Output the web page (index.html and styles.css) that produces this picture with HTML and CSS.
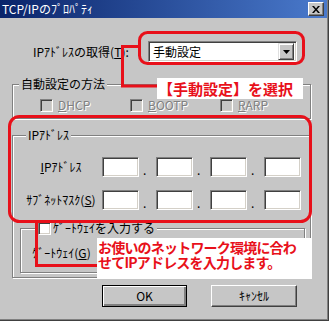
FILE: index.html
```html
<!DOCTYPE html>
<html lang="ja">
    <head>
        <meta charset="UTF-8">
        <meta name="viewport" content="width=device-width, initial-scale=1.0">
        <title>TCP/IPのプロパティ</title>
        <link rel="stylesheet" href="styles.css">
    </head>
    <body>
        <div class="window">
            <div class="titlebar">
                <span class="title">TCP/IPのﾌﾟﾛﾊﾟﾃｨ</span>
                <span class="close-btn">
                    <svg width="8" height="7" viewBox="0 0 8 7"><path d="M0 0h2l2 2.5L6 0h2L5 3.5 8 7H6L4 4.5 2 7H0l3-3.5z" fill="#000"/></svg>
                </span>
            </div>

            <div class="content">
                <div class="obtain-row">
                    <span class="obtain-label">IPｱﾄﾞﾚｽの取得(<u>T</u>):</span>
                    <div class="combo">
                        <span class="combo-text">手動設定</span>
                        <span class="combo-btn">
                            <svg width="7" height="4" viewBox="0 0 7 4"><path d="M0 0h7L3.5 4z" fill="#000"/></svg>
                        </span>
                    </div>
                </div>

                <fieldset class="group auto-group">
                    <legend>自動設定の方法</legend>
                    <div class="check-row">
                        <span class="check disabled"><span class="box"></span><span><u>D</u>HCP</span></span>
                        <span class="check disabled"><span class="box"></span><span><u>B</u>OOTP</span></span>
                        <span class="check disabled"><span class="box"></span><span><u>R</u>ARP</span></span>
                    </div>
                </fieldset>

                <fieldset class="group ip-group">
                    <legend>IPｱﾄﾞﾚｽ</legend>
                    <div class="addr-row">
                        <span class="addr-label"><u>I</u>Pｱﾄﾞﾚｽ</span>
                        <span class="octet"></span><span class="dot">.</span>
                        <span class="octet"></span><span class="dot">.</span>
                        <span class="octet"></span><span class="dot">.</span>
                        <span class="octet"></span>
                    </div>
                    <div class="addr-row">
                        <span class="addr-label">ｻﾌﾞﾈｯﾄﾏｽｸ(<u>S</u>)</span>
                        <span class="octet"></span><span class="dot">.</span>
                        <span class="octet"></span><span class="dot">.</span>
                        <span class="octet"></span><span class="dot">.</span>
                        <span class="octet"></span>
                    </div>

                    <fieldset class="group gw-group">
                        <legend><span class="box white"></span><span>ｹﾞｰﾄｳｪｲを入力する</span></legend>
                        <div class="addr-row gw-row">
                            <span class="addr-label">ｹﾞｰﾄｳｪｲ(<u>G</u>)</span>
                            <span class="octet"></span><span class="dot"></span>
                            <span class="octet"></span><span class="dot"></span>
                            <span class="octet"></span><span class="dot"></span>
                            <span class="octet"></span>
                        </div>
                    </fieldset>
                </fieldset>

                <div class="buttons">
                    <button class="btn default">OK</button>
                    <button class="btn">ｷｬﾝｾﾙ</button>
                </div>
            </div>

            <!-- red annotations drawn over the dialog -->
            <svg class="marks" width="329" height="321" viewBox="0 0 329 321">
                <rect x="139.5" y="32.5" width="164" height="31" rx="8" />
                <path d="M139 46.5H122.5V86H158" />
                <rect x="9.5" y="116.5" width="301" height="105" rx="10" />
                <path d="M36.5 222V265.5H98" />
            </svg>
            <div class="note note-manual">【手動設定】を選択</div>
            <div class="note note-ip">お使いのネットワーク環境に合わ<br>せてIPアドレスを入力します。</div>
        </div>
    </body>
</html>
```

FILE: styles.css
```css
* {
    box-sizing: border-box;
}
body {
    margin: 0;
    font-family: "Noto Sans CJK JP", "Liberation Sans", sans-serif;
    font-size: 12px;
    line-height: 14px;
    color: #000;
    background: #c6c6c6;
}
.window {
    position: relative;
    width: 329px;
    height: 321px;
    background: #c6c6c6;
    box-shadow: inset -1px -1px 0 #404040, inset -2px -2px 0 #808080;
    overflow: hidden;
}
.titlebar {
    height: 18px;
    margin-right: 2px;
    padding: 0 3px 0 2px;
    display: flex;
    align-items: center;
    justify-content: space-between;
    background: linear-gradient(to right, #0a246a, #4a7acc);
    color: #fff;
}
.close-btn {
    width: 16px;
    height: 14px;
    display: flex;
    align-items: center;
    justify-content: center;
    background: #c6c6c6;
    border: 1px solid;
    border-color: #fff #404040 #404040 #fff;
    box-shadow: inset -1px -1px 0 #808080;
}
.content {
    padding: 23px 18px 0 12px;
}

/* top row with the combo box */
.obtain-row {
    display: flex;
    align-items: center;
    height: 21px;
}
.obtain-label {
    width: 136px;
    padding-left: 21px;
}
.combo {
    width: 149px;
    height: 21px;
    display: flex;
    align-items: center;
    justify-content: space-between;
    padding: 0 2px 0 4px;
    background: #fff;
    border: 1px solid;
    border-color: #808080 #fff #fff #808080;
    box-shadow: inset 1px 1px 0 #404040, inset -1px -1px 0 #d4d0c8;
}
.combo-btn {
    width: 16px;
    height: 17px;
    display: flex;
    align-items: center;
    justify-content: center;
    background: #c6c6c6;
    border: 1px solid;
    border-color: #dfdfdf #404040 #404040 #dfdfdf;
    box-shadow: inset 1px 1px 0 #fff, inset -1px -1px 0 #808080;
}

/* etched group boxes */
.group {
    margin: 0;
    padding: 0;
    min-width: 0;
    border: 1px solid #808080;
    box-shadow: inset 1px 1px 0 #fff, 1px 1px 0 #fff;
}
.group legend {
    margin-left: 6px;
    padding: 0 2px;
    background: #c6c6c6;
    line-height: 14px;
}
.auto-group {
    margin-top: 15px;
}
.check-row {
    display: grid;
    grid-template-columns: 90px 90px 90px;
    height: 27px;
    padding: 7px 0 7px 27px;
}
.check {
    display: flex;
    align-items: center;
    gap: 5px;
}
.box {
    display: inline-block;
    width: 13px;
    height: 13px;
    background: #c6c6c6;
    border: 1px solid;
    border-color: #808080 #fff #fff #808080;
    box-shadow: inset 1px 1px 0 #404040, inset -1px -1px 0 #d4d0c8;
}
.box.white {
    background: #fff;
}
.disabled {
    color: #808080;
    text-shadow: 1px 1px 0 #fff;
}

.ip-group {
    margin-top: 9px;
    padding: 15px 5px 4px 7px;
}
.addr-row {
    display: flex;
    align-items: center;
    height: 20px;
}
.addr-row + .addr-row {
    margin-top: 13px;
}
.addr-label {
    width: 82px;
    text-align: center;
}
.octet {
    width: 37px;
    height: 20px;
    background: #fff;
    border: 1px solid;
    border-color: #808080 #fff #fff #808080;
    box-shadow: inset 1px 1px 0 #404040, inset -1px -1px 0 #d4d0c8;
}
.dot {
    width: 17px;
    padding-left: 4px;
    align-self: flex-end;
    line-height: 14px;
}
.gw-group {
    margin-top: 11px;
    padding: 8px 0 9px 0;
}
.gw-group legend {
    display: flex;
    align-items: center;
    gap: 2px;
    margin-left: 17px;
    padding: 0 2px 0 0;
}
.gw-row .addr-label {
    width: 81px;
}

.buttons {
    display: flex;
    justify-content: flex-end;
    gap: 24px;
    margin-top: 7px;
    padding-right: 14px;
}
.btn {
    width: 86px;
    height: 22px;
    padding: 0;
    font: inherit;
    color: #000;
    background: #c6c6c6;
    border: 1px solid;
    border-color: #fff #404040 #404040 #fff;
    box-shadow: inset -1px -1px 0 #808080;
}
.btn.default {
    width: 85px;
    border-color: #000;
    box-shadow: inset 1px 1px 0 #fff, inset -2px -2px 0 #808080;
}

/* annotations */
.marks {
    position: absolute;
    left: 0;
    top: 0;
    pointer-events: none;
}
.marks rect,
.marks path {
    fill: none;
    stroke: #e8101a;
    stroke-width: 3;
}
.note {
    position: absolute;
    background: #fff;
    color: #e8101a;
    font-weight: bold;
}
.note-manual {
    left: 157px;
    top: 78px;
    width: 146px;
    height: 21px;
    padding-left: 1px;
    font-size: 15px;
    line-height: 21px;
}
.note-ip {
    left: 97px;
    top: 238px;
    width: 215px;
    height: 40px;
    padding: 2px 0 0 1px;
    font-size: 14px;
    line-height: 15px;
    letter-spacing: -0.8px;
}
```
